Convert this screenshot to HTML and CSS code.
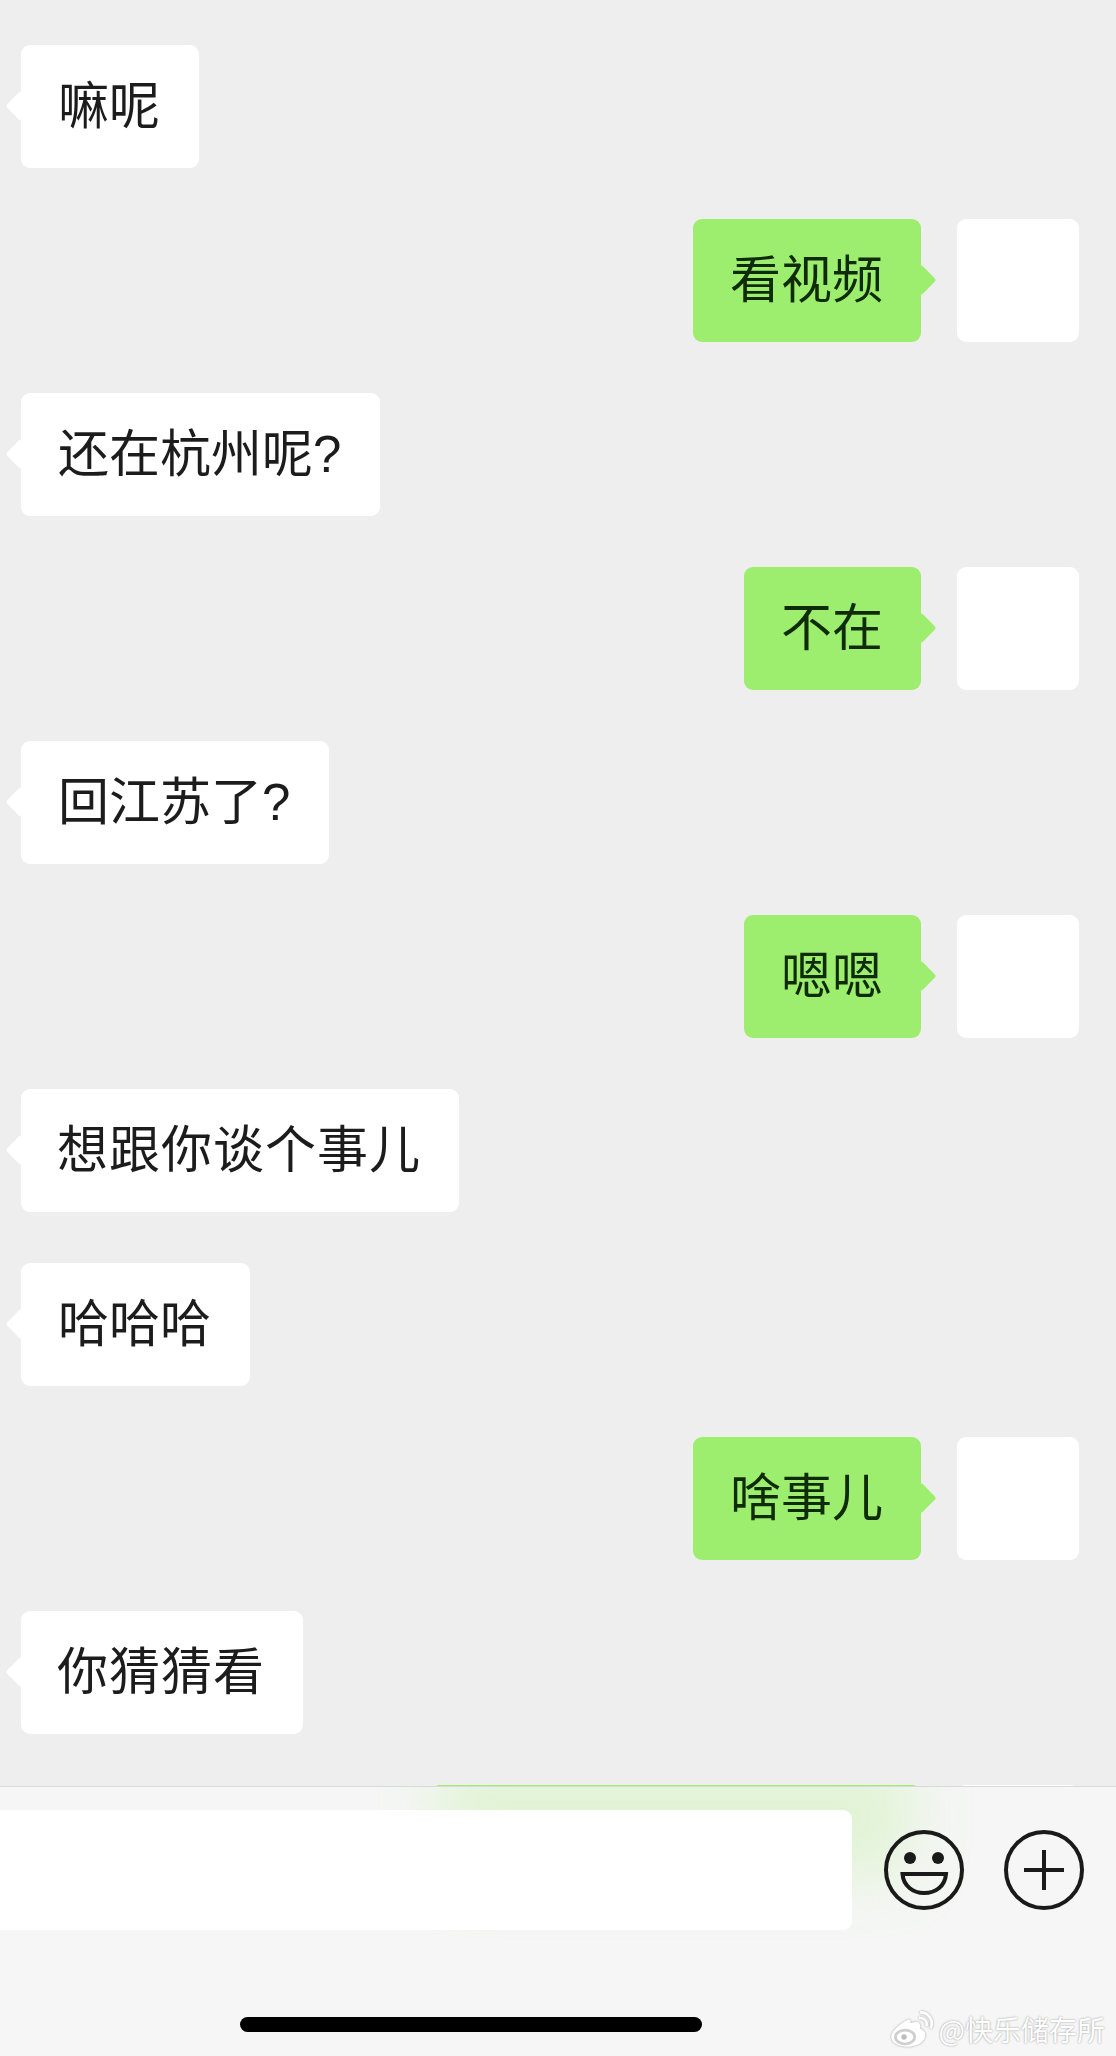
FILE: index.html
```html
<!DOCTYPE html>
<html lang="zh-CN">
<head>
    <meta charset="UTF-8">
    <meta name="viewport" content="width=device-width, initial-scale=1.0">
    <title>聊天</title>
    <link rel="stylesheet" href="styles.css">
</head>
<body>
    <div class="chat">
        <div class="row"><div class="bubble left">嘛呢</div></div>
        <div class="row me"><div class="bubble right">看视频</div><div class="avatar"></div></div>
        <div class="row"><div class="bubble left">还在杭州呢?</div></div>
        <div class="row me"><div class="bubble right">不在</div><div class="avatar"></div></div>
        <div class="row"><div class="bubble left">回江苏了?</div></div>
        <div class="row me"><div class="bubble right">嗯嗯</div><div class="avatar"></div></div>
        <div class="row"><div class="bubble left wide">想跟你谈个事儿</div></div>
        <div class="row"><div class="bubble left">哈哈哈</div></div>
        <div class="row me"><div class="bubble right">啥事儿</div><div class="avatar"></div></div>
        <div class="row"><div class="bubble left wide">你猜猜看</div></div>
        <div class="row me"><div class="bubble right hidden-msg"></div><div class="avatar"></div></div>
    </div>

    <div class="bar">
        <div class="bar-tint"></div>
        <div class="bar-main">
            <div class="input"></div>
            <svg class="icon" viewBox="0 0 80 80">
                <circle cx="40" cy="40" r="38" fill="none" stroke="#1a1a1a" stroke-width="4"/>
                <circle cx="26" cy="28" r="6" fill="#1a1a1a"/>
                <circle cx="54" cy="28" r="6" fill="#1a1a1a"/>
                <path d="M18.500 44H62C61 56 52 63 40 63C29 63 19.500 56 18.500 44Z" fill="none" stroke="#1a1a1a" stroke-width="4"/>
            </svg>
            <svg class="icon" viewBox="0 0 80 80">
                <circle cx="40" cy="40" r="38" fill="none" stroke="#1a1a1a" stroke-width="4"/>
                <path d="M20 40H60M40 20V60" fill="none" stroke="#1a1a1a" stroke-width="4"/>
            </svg>
        </div>
        <div class="home"></div>
        <div class="mark">
            <svg class="mark-logo" viewBox="0 0 42 35">
                <path d="M17 9C9 13 2 20 2 25C2 31 10 34 17 34C27 34 34 29 34 23C34 19 30 18 29 17C30 13 28 10 24 11C22 11.500 20 12 20 12C21 9 19 8 17 9Z" fill="#fff"/>
                <ellipse cx="15" cy="25" rx="9" ry="6.500" fill="none" stroke="#cfcfcf" stroke-width="2.500"/>
                <circle cx="14" cy="25" r="2.500" fill="#bdbdbd"/>
                <path d="M28 7C33 7 36 10 35 15M29 2C37 2 42 9 39 17" fill="none" stroke="#fff" stroke-width="2.500"/>
            </svg>
            <span>@快乐储存所</span>
        </div>
    </div>
</body>
</html>
```

FILE: styles.css
```css
body {
    margin: 0;
    height: 2056px;
    overflow: hidden;
    background-color: #eeeeee;
    font-family: "Liberation Sans", "Noto Sans CJK SC", sans-serif;
}
.chat {
    height: 1786px;
    box-sizing: border-box;
    padding: 45px 37px 0 21px;
    display: flex;
    flex-direction: column;
    gap: 51px;
    overflow: hidden;
}
.row {
    display: flex;
    flex-shrink: 0;
    height: 123px;
}
.row.me {
    justify-content: flex-end;
    gap: 36px;
}
.bubble {
    position: relative;
    height: 123px;
    border-radius: 9px;
    font-size: 51px;
    line-height: 124px;
    color: #1c1c1c;
    white-space: nowrap;
}
.bubble::before {
    content: "";
    position: absolute;
    top: 50px;
    width: 22px;
    height: 22px;
    border-radius: 3px;
    transform: rotate(45deg);
}
.left {
    padding: 0 39px 0 37px;
    background: #fff;
}
.left::before {
    left: -11px;
    background: #fff;
}
.wide {
    padding: 0 38px 0 36px;
    letter-spacing: 1px;
}
.right {
    padding: 0 38px 0 37px;
    background: #9dee6e;
    color: #0f2b08;
}
.right::before {
    right: -11px;
    background: #9dee6e;
}
.hidden-msg {
    width: 415px;
}
.avatar {
    width: 122px;
    height: 123px;
    background: #fff;
    border-radius: 9px;
}
.bar {
    position: relative;
    height: 270px;
    box-sizing: border-box;
    border-top: 1px solid #d9d9d9;
    background: #f5f6f5;
    overflow: hidden;
}
.bar-tint {
    position: absolute;
    left: 440px;
    top: -30px;
    width: 470px;
    height: 120px;
    background: #c9f0ad;
    opacity: 0.45;
    filter: blur(30px);
}
.bar-main {
    position: relative;
    display: flex;
    align-items: center;
    padding: 23px 32px 0 0;
}
.input {
    width: 852px;
    height: 120px;
    background: #fff;
    border-radius: 0 9px 9px 0;
    margin-right: 32px;
}
.icon {
    width: 80px;
    height: 80px;
}
.icon + .icon {
    margin-left: 40px;
}
.home {
    position: absolute;
    left: 240px;
    top: 230px;
    width: 462px;
    height: 15px;
    background: #000;
    border-radius: 8px;
}
.mark {
    position: absolute;
    right: 11px;
    top: 222px;
    display: flex;
    align-items: center;
    gap: 5px;
    font-family: "Noto Sans CJK SC", sans-serif;
    font-size: 28px;
    line-height: 40px;
    color: #fff;
    text-shadow: 0 0 2px #8c8c8c;
}
.mark-logo {
    width: 45px;
    height: 38px;
    filter: drop-shadow(0 0 1px #a0a0a0);
}
```
